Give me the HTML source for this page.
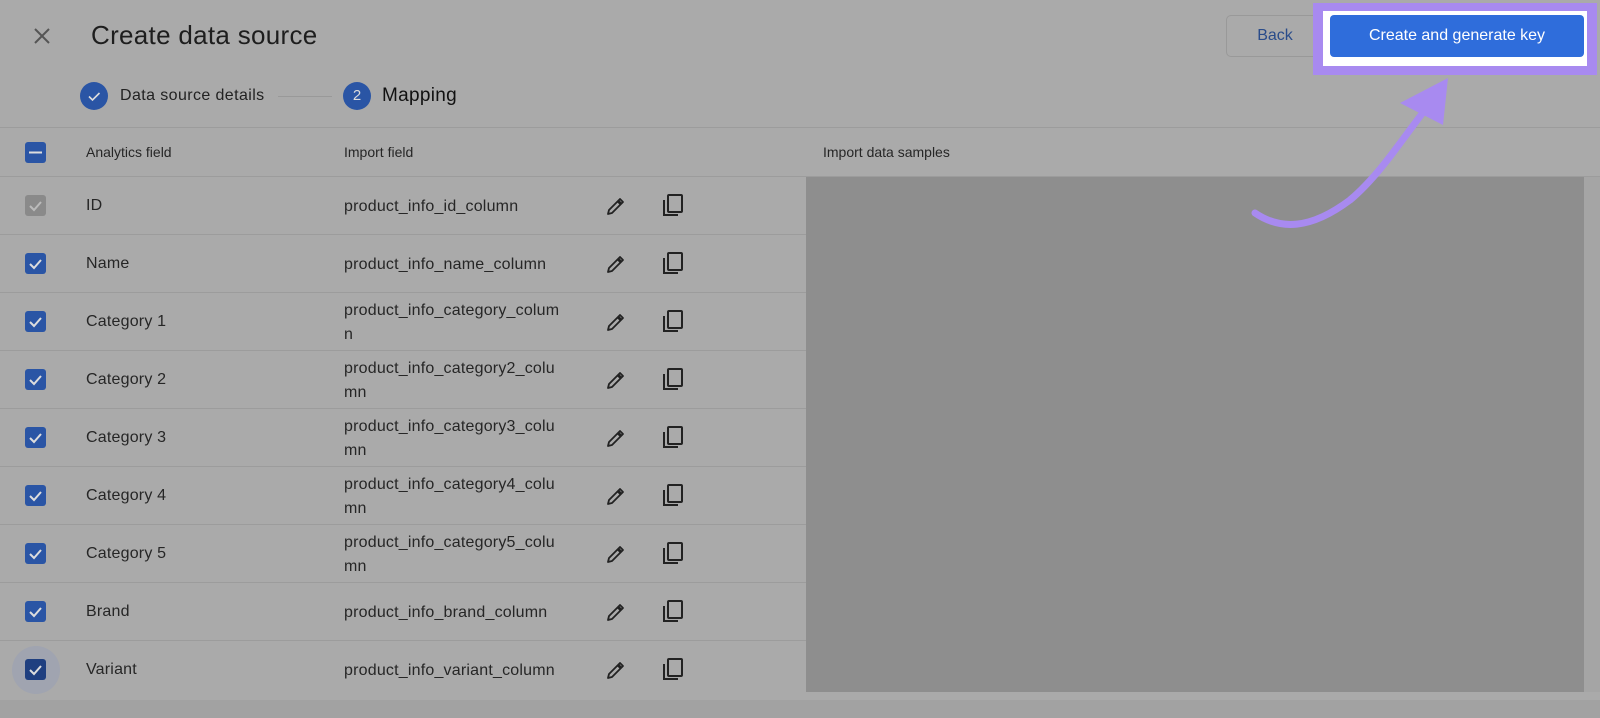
<!DOCTYPE html>
<html><head><style>
body{margin:0;width:1600px;height:718px;background:#aaaaaa;font-family:"Liberation Sans",sans-serif;position:relative;overflow:hidden;color:#202020}
.a{position:absolute}
.line{position:absolute;left:0;width:1600px;height:1px;background:#9c9c9c}
.cb{position:absolute;left:25px;width:21px;height:21px;border-radius:3px;background:#2a55a5}
.cb svg{position:absolute;left:0;top:0}
.t{position:absolute;font-size:16px;color:#262626;white-space:nowrap}
.f{position:absolute;left:344px;font-size:16px;color:#262626;line-height:24px;letter-spacing:0.2px}
</style></head><body>
<svg class="a" style="left:33px;top:27px" width="18" height="18"><path d="M2 2L16 16M16 2L2 16" stroke="#555" stroke-width="2"/></svg>
<div class="a" style="left:91px;top:20px;font-size:26px;color:#1e1e1e;letter-spacing:0.3px">Create data source</div>
<div class="a" style="left:80px;top:82px;width:28px;height:28px;border-radius:50%;background:#2a55a5"></div>
<svg class="a" style="left:80px;top:82px" width="28" height="28"><path d="M9 14.5l3.5 3.5 7-7" stroke="#ddd" stroke-width="1.6" fill="none"/></svg>
<div class="a" style="left:120px;top:87px;font-size:16px;color:#222;letter-spacing:0.4px">Data source details</div>
<div class="a" style="left:278px;top:96px;width:54px;height:1px;background:#999"></div>
<div class="a" style="left:343px;top:82px;width:28px;height:28px;border-radius:50%;background:#2a55a5;color:#ddd;font-size:15px;text-align:center;line-height:28px">2</div>
<div class="a" style="left:382px;top:85px;font-size:19px;color:#111;letter-spacing:0.3px">Mapping</div>
<div class="a" style="left:1226px;top:15px;width:98px;height:42px;border:1px solid #999;border-radius:5px;box-sizing:border-box;color:#2a4c8a;font-size:16px;text-align:center;line-height:40px">Back</div>
<div class="a" style="left:1313px;top:3px;width:284px;height:72px;background:#a88af0"></div>
<div class="a" style="left:1323px;top:11px;width:264px;height:55px;background:#fff"></div>
<div class="a" style="left:1330px;top:15px;width:254px;height:42px;background:#2f6ddb;border-radius:4px;color:#fff;font-size:16px;text-align:center;line-height:42px">Create and generate key</div>
<div class="line" style="top:127px"></div>
<div class="cb" style="top:142px"><svg width="21" height="21"><path d="M4 10.5h13" stroke="#ddd" stroke-width="2"/></svg></div>
<div class="t" style="left:86px;top:144px;font-size:14px">Analytics field</div>
<div class="t" style="left:344px;top:144px;font-size:14px">Import field</div>
<div class="t" style="left:823px;top:144px;font-size:14px">Import data samples</div>
<div class="line" style="top:176px"></div>
<div class="a" style="left:806px;top:177px;width:778px;height:515px;background:#8e8e8e"></div>
<div class="a" style="left:1584px;top:177px;width:16px;height:515px;background:#a5a5a5"></div>
<div class="a" style="left:0;top:700px;width:1600px;height:18px;background:#a2a2a2"></div>
<div class="a" style="left:12px;top:646px;width:48px;height:48px;border-radius:50%;background:#a0a4b0"></div>
<div id="rows"></div>
<svg class="a" style="left:1240px;top:75px;z-index:5" width="220" height="170"><path d="M15 138 C40 155 70 155 110 125 C140 100 165 60 185 35" stroke="#a88af0" stroke-width="7" fill="none" stroke-linecap="round"/><path d="M160 28 L208 3 L203 50 Z" fill="#a88af0"/></svg>
<script>
var r=[["ID",["product_info_id_column"]],["Name",["product_info_name_column"]],["Category 1",["product_info_category_colum","n"]],["Category 2",["product_info_category2_colu","mn"]],["Category 3",["product_info_category3_colu","mn"]],["Category 4",["product_info_category4_colu","mn"]],["Category 5",["product_info_category5_colu","mn"]],["Brand",["product_info_brand_column"]],["Variant",["product_info_variant_column"]]];
var h="";
for(var i=0;i<r.length;i++){var t=177+58*i,c=t+29;
h+='<div class="cb" style="top:'+(c-11)+'px;background:'+(i==0?'#8a8a8a':(i==8?'#1f3f80':'#2a55a5'))+'"><svg width="21" height="21"><path d="M5 11l4 4 7-8" stroke="'+(i==0?'#bbb':'#ddd')+'" stroke-width="2" fill="none"/></svg></div>';
h+='<div class="t" style="left:86px;top:'+(c-9)+'px;letter-spacing:0.2px">'+r[i][0]+'</div>';
var n=r[i][1].length;h+='<div class="f" style="top:'+(c-12*n+1)+'px">'+r[i][1].join('<br>')+'</div>';
h+='<svg class="a" style="left:604px;top:'+(c-12)+'px" width="24" height="24"><path d="M4 20l1-4L16 5l3 3L8 19z" stroke="#222" stroke-width="1.8" fill="none" stroke-linejoin="round"/><path d="M14 7l3 3" stroke="#222" stroke-width="3"/></svg>';
h+='<svg class="a" style="left:660px;top:'+(c-13)+'px" width="26" height="26"><rect x="8" y="2" width="14" height="17" rx="1" stroke="#222" stroke-width="2" fill="none"/><path d="M4 7v15h14" stroke="#222" stroke-width="2" fill="none"/></svg>';
if(i<8)h+='<div class="line" style="top:'+(t+57)+'px;width:806px"></div>';}
document.getElementById("rows").innerHTML=h;
</script>
</body></html>
